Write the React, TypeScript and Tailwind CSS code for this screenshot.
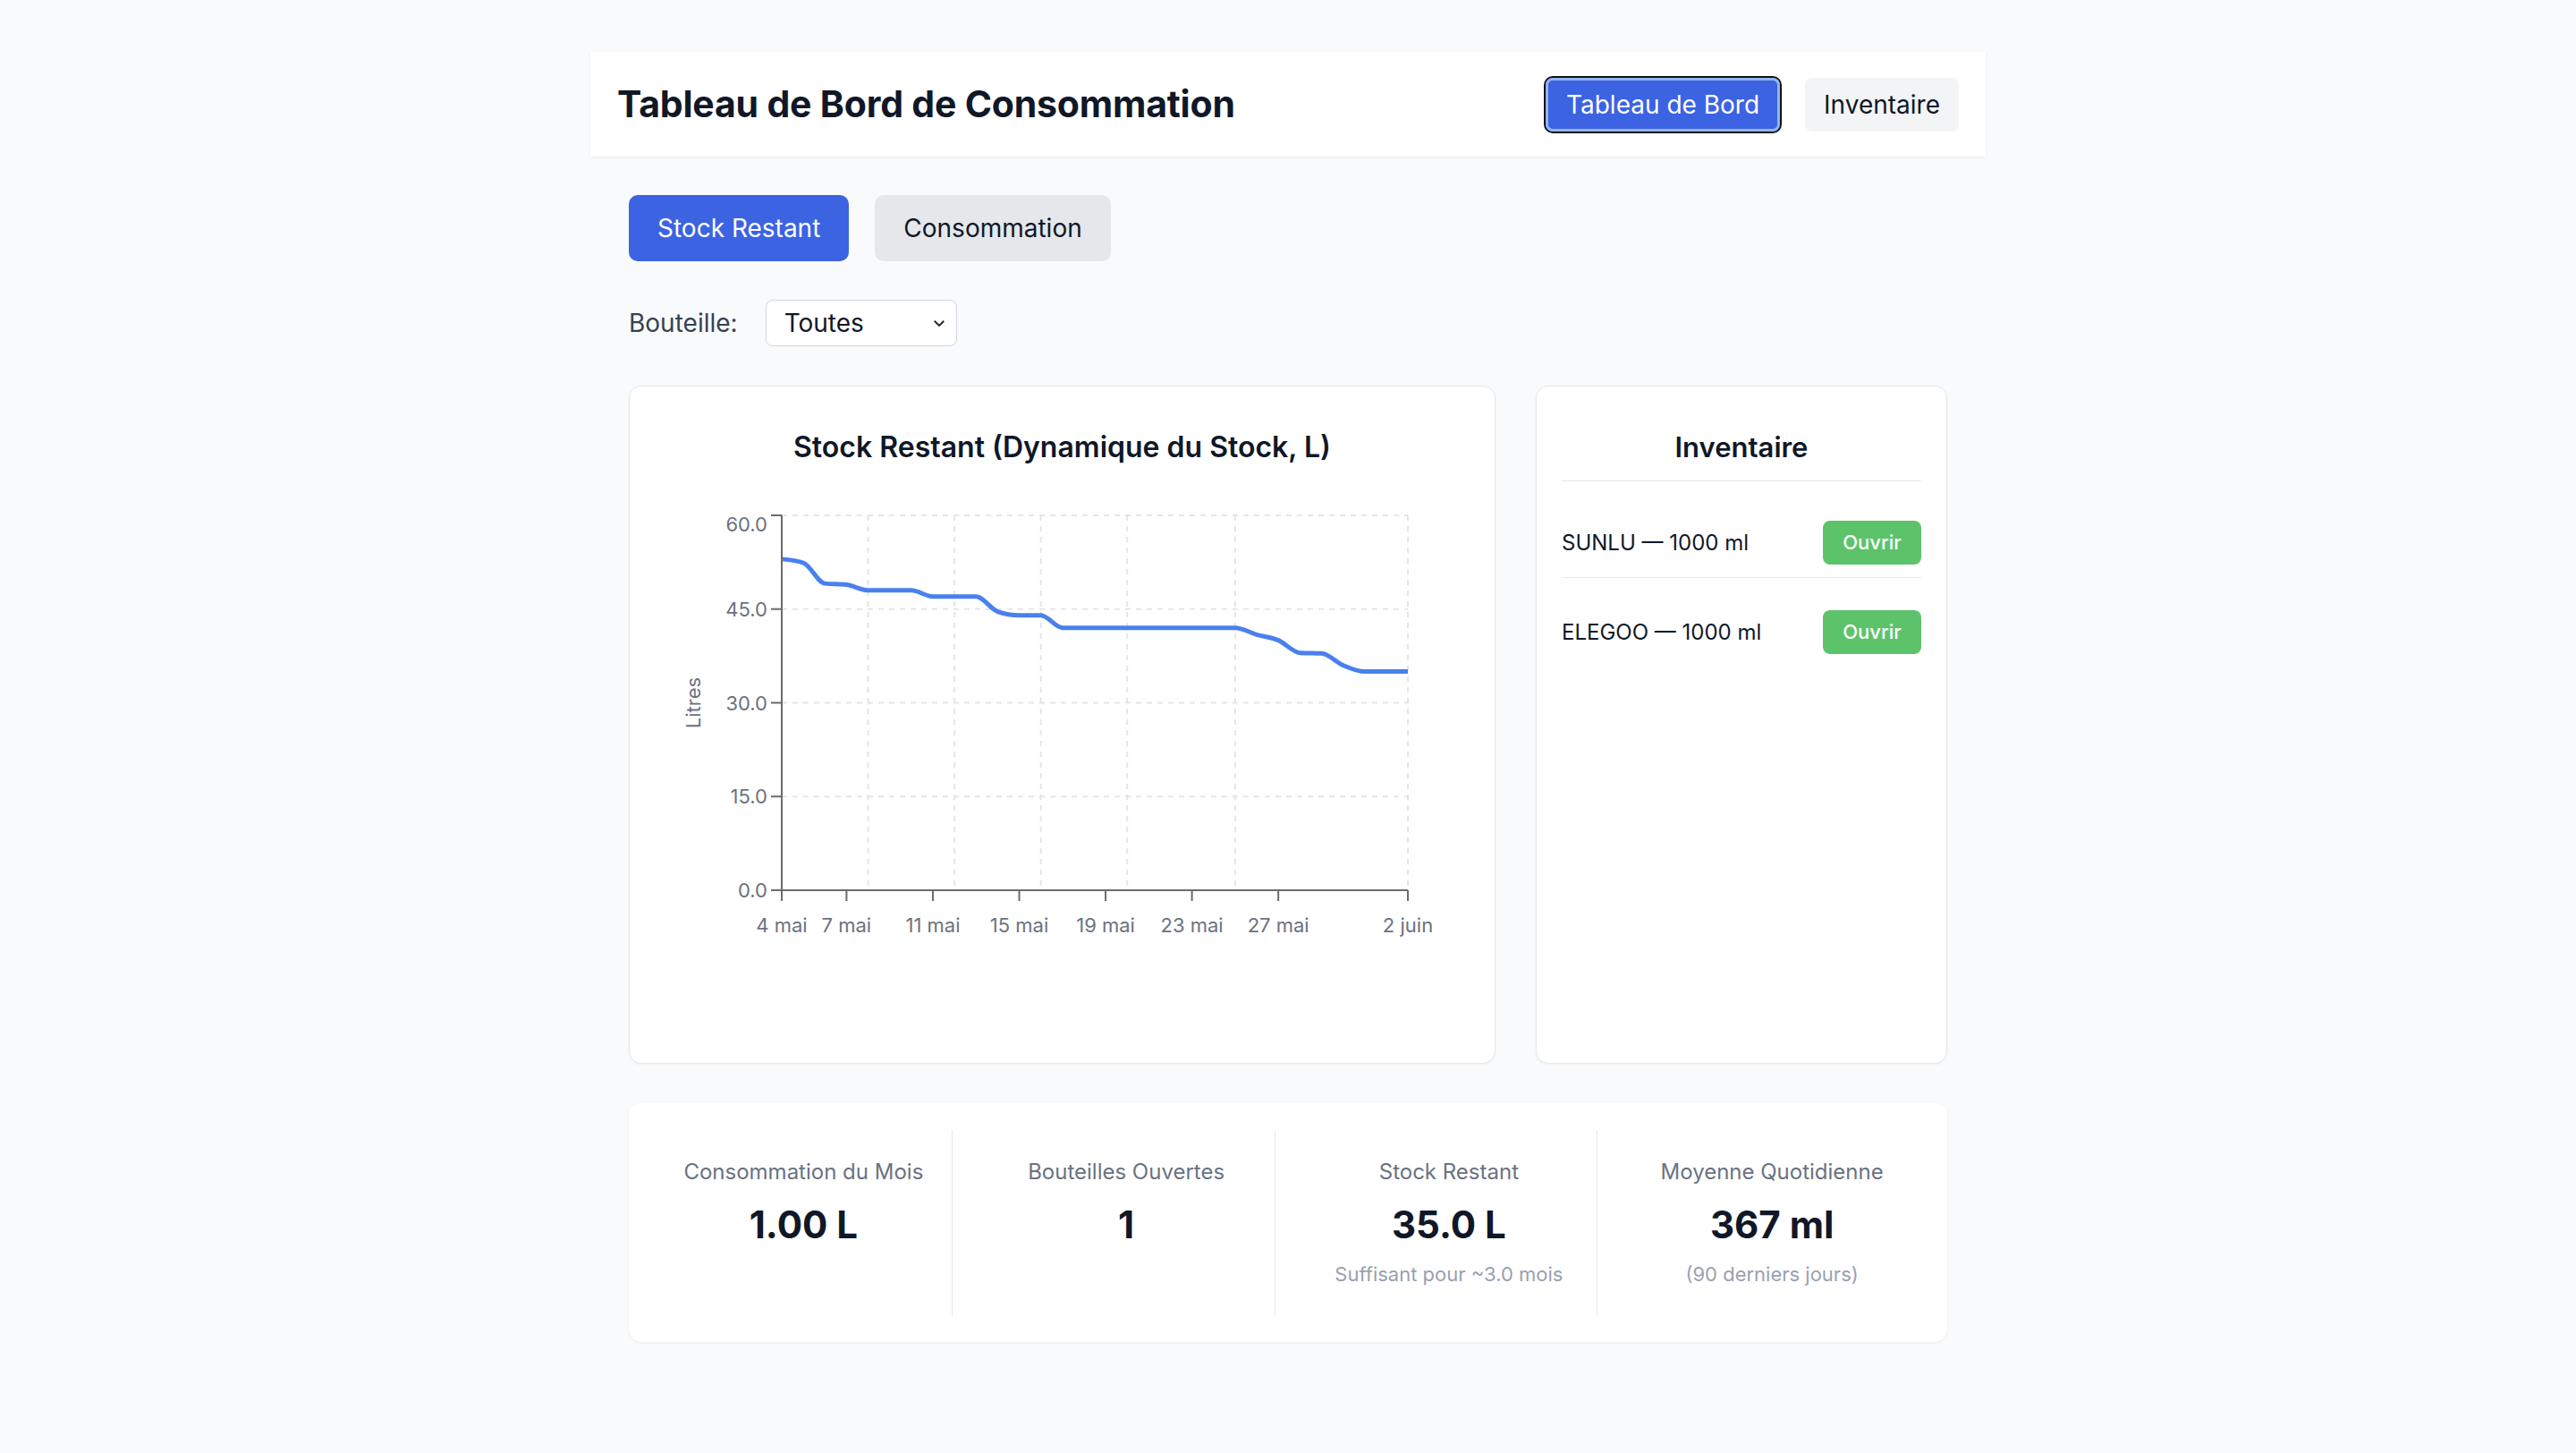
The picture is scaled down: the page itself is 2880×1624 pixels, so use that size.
const days = [
  53, 52.4, 49.1, 48.9, 48, 48, 48, 47, 47, 47, 44.6, 44, 44, 42, 42, 42, 42, 42, 42, 42, 42, 42, 40.9, 40, 38,
  37.9, 36, 35, 35, 35,
];

// plot box inside the chart svg
const X0 = 170;
const X1 = 870;
const Y0 = 56;
const Y1 = 475;

const px = (d: number) => X0 + ((X1 - X0) * d) / 29;
const py = (v: number) => Y1 - ((Y1 - Y0) * v) / 60;

// d3 monotoneX, same curve recharts draws
function monotonePath(pts: [number, number][]) {
  const n = pts.length;
  const sign = (v: number) => (v < 0 ? -1 : 1);
  const t: number[] = new Array(n).fill(0);
  for (let i = 1; i < n - 1; i++) {
    const [x0, y0] = pts[i - 1];
    const [x1, y1] = pts[i];
    const [x2, y2] = pts[i + 1];
    const h0 = x1 - x0;
    const h1 = x2 - x1;
    const s0 = (y1 - y0) / h0;
    const s1 = (y2 - y1) / h1;
    const p = (s0 * h1 + s1 * h0) / (h0 + h1);
    t[i] = (sign(s0) + sign(s1)) * Math.min(Math.abs(s0), Math.abs(s1), 0.5 * Math.abs(p)) || 0;
  }
  const h = pts[1][0] - pts[0][0];
  t[0] = ((3 * (pts[1][1] - pts[0][1])) / h - t[1]) / 2;
  const hl = pts[n - 1][0] - pts[n - 2][0];
  t[n - 1] = ((3 * (pts[n - 1][1] - pts[n - 2][1])) / hl - t[n - 2]) / 2;
  let d = `M${pts[0][0]},${pts[0][1]}`;
  for (let i = 1; i < n; i++) {
    const [x0, y0] = pts[i - 1];
    const [x1, y1] = pts[i];
    const dx = (x1 - x0) / 3;
    d += `C${x0 + dx},${y0 + dx * t[i - 1]},${x1 - dx},${y1 - dx * t[i]},${x1},${y1}`;
  }
  return d;
}

const xTicks: [number, string][] = [
  [0, "4 mai"],
  [3, "7 mai"],
  [7, "11 mai"],
  [11, "15 mai"],
  [15, "19 mai"],
  [19, "23 mai"],
  [23, "27 mai"],
  [29, "2 juin"],
];
const gridX = [4, 8, 12, 16, 21, 29];
const yTicks = [0, 15, 30, 45, 60];

function StockChart() {
  const line = monotonePath(days.map((v, i) => [px(i), py(v)]));
  return (
    <svg width="967" height="560" className="block">
      {yTicks
        .filter((v) => v > 0)
        .map((v) => (
          <line key={v} x1={X0} x2={X1} y1={py(v)} y2={py(v)} stroke="#e3e5e8" strokeWidth="2" strokeDasharray="6 6" />
        ))}
      {gridX.map((d) => (
        <line key={d} x1={px(d)} x2={px(d)} y1={Y0} y2={Y1} stroke="#e3e5e8" strokeWidth="2" strokeDasharray="6 6" />
      ))}
      <path d={line} fill="none" stroke="#4a80ee" strokeWidth="5" />
      <line x1={X0} x2={X0} y1={Y0} y2={Y1} stroke="#6b6b6b" strokeWidth="2" />
      <line x1={X0} x2={X1} y1={Y1} y2={Y1} stroke="#6b6b6b" strokeWidth="2" />
      {yTicks.map((v) => (
        <g key={v}>
          <line x1={X0 - 12} x2={X0} y1={py(v)} y2={py(v)} stroke="#6b6b6b" strokeWidth="2" />
          <text
            x={X0 - 16}
            y={py(v) + (v === 60 ? 18 : 8)}
            textAnchor="end"
            fontSize="22"
            fill="#6b7280"
            fontFamily="Inter"
          >
            {v.toFixed(1)}
          </text>
        </g>
      ))}
      {xTicks.map(([d, label]) => (
        <g key={label}>
          <line x1={px(d)} x2={px(d)} y1={Y1} y2={Y1 + 12} stroke="#6b6b6b" strokeWidth="2" />
          <text x={px(d)} y={Y1 + 47} textAnchor="middle" fontSize="22" fill="#6b7280" fontFamily="Inter">
            {label}
          </text>
        </g>
      ))}
      <text
        x={0}
        y={0}
        transform={`translate(79 ${(Y0 + Y1) / 2}) rotate(-90)`}
        textAnchor="middle"
        fontSize="22"
        fill="#6b7280"
        fontFamily="Inter"
      >
        Litres
      </text>
    </svg>
  );
}

const bottles = ["SUNLU — 1000 ml", "ELEGOO — 1000 ml"];

const stats = [
  { label: "Consommation du Mois", value: "1.00 L", sub: "" },
  { label: "Bouteilles Ouvertes", value: "1", sub: "" },
  { label: "Stock Restant", value: "35.0 L", sub: "Suffisant pour ~3.0 mois" },
  { label: "Moyenne Quotidienne", value: "367 ml", sub: "(90 derniers jours)" },
];

export default function App() {
  return (
    <div className="min-h-screen bg-[#f9fafb] pt-[58px] font-['Inter',sans-serif] text-gray-900">
      <div className="mx-auto w-[1560px]">
        <header className="flex h-[117px] items-center justify-between bg-white px-[30px] shadow-[0_1px_3px_rgba(0,0,0,0.06)]">
          <h1 className="text-[41px] font-bold tracking-[-0.2px]">Tableau de Bord de Consommation</h1>
          <div className="flex items-center gap-[28px]">
            <button className="h-[60px] rounded-[8px] bg-[#3b63e2] px-[23px] text-[28px] text-white shadow-[0_0_0_2px_#111,inset_0_0_0_3px_#93b4f6]">
              Tableau de Bord
            </button>
            <button className="h-[60px] rounded-[8px] bg-gray-100 px-[21px] text-[28px] text-gray-900">Inventaire</button>
          </div>
        </header>

        <main className="px-[43px]">
          <div className="mt-[43px] flex gap-[29px]">
            <button className="rounded-[10px] bg-[#3b63e2] px-[32px] py-4 text-[28px] leading-[42px] text-white">
              Stock Restant
            </button>
            <button className="rounded-[10px] bg-gray-200 px-[32px] py-4 text-[28px] leading-[42px] text-gray-900">
              Consommation
            </button>
          </div>

          <div className="mt-[43px] flex items-center gap-[31px]">
            <span className="text-[28px] text-gray-700">Bouteille:</span>
            <div className="flex h-[52px] w-[214px] items-center justify-between rounded-[8px] border border-gray-300 bg-white pl-[20px] pr-[10px]">
              <span className="text-[28px]">Toutes</span>
              <svg width="18" height="18" viewBox="0 0 24 24" fill="none" stroke="#222" strokeWidth="2.5">
                <path d="M5 9l7 7 7-7" />
              </svg>
            </div>
          </div>

          <div className="mt-[44px] grid grid-cols-[969px_1fr] gap-[45px]">
            <section className="h-[758px] rounded-[14px] border border-gray-200 bg-white shadow-[0_1px_3px_rgba(0,0,0,0.05)]">
              <h2 className="pt-[48px] text-center text-[32px] font-semibold leading-[40px]">
                Stock Restant (Dynamique du Stock, L)
              </h2>
              <StockChart />
            </section>

            <section className="rounded-[14px] border border-gray-200 bg-white px-[28px] shadow-[0_1px_3px_rgba(0,0,0,0.05)]">
              <h2 className="border-b border-gray-200 pb-[17px] pt-[48px] text-center text-[31px] font-semibold leading-[40px]">
                Inventaire
              </h2>
              <div className="flex flex-col gap-[22px] pt-[30px]">
                {bottles.map((b, i) => (
                  <div
                    key={b}
                    className={`flex items-center justify-between py-[14px] ${i === 0 ? "border-b border-gray-200" : ""}`}
                  >
                    <span className="text-[24px] text-gray-900">{b}</span>
                    <button className="h-[49px] w-[110px] rounded-[8px] bg-[#5dc36b] text-[22px] font-medium text-white">
                      Ouvrir
                    </button>
                  </div>
                ))}
              </div>
            </section>
          </div>

          <div className="mt-[44px] grid grid-cols-4 gap-[29px] rounded-[14px] bg-white p-[30px] shadow-[0_1px_3px_rgba(0,0,0,0.06)]">
            {stats.map((s, i) => (
              <div key={s.label} className={`flex flex-col items-center py-[30px] ${i < 3 ? "border-r border-gray-200" : ""}`}>
                <span className="text-[24px] leading-[34px] text-gray-500">{s.label}</span>
                <span className="mt-[16px] text-[42px] font-bold leading-[52px]">{s.value}</span>
                {s.sub && <span className="mt-[13px] text-[22px] leading-[32px] text-gray-400">{s.sub}</span>}
              </div>
            ))}
          </div>
        </main>
      </div>
    </div>
  );
}
